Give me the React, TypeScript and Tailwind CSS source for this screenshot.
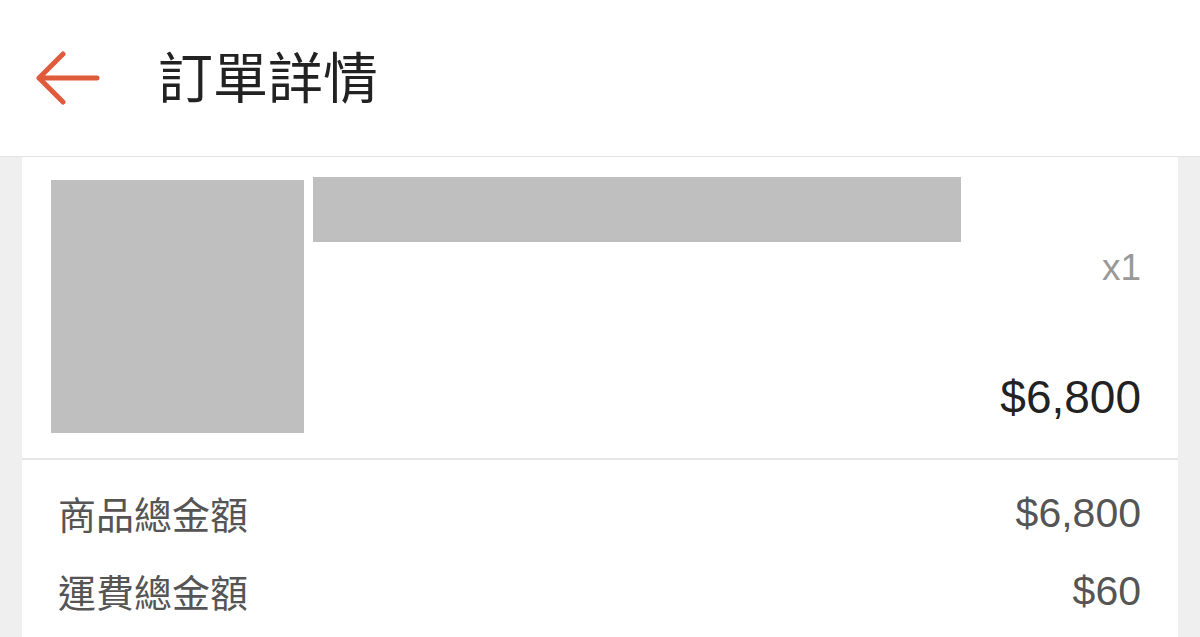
import React from 'react';

const cjk = { fontFamily: '"Noto Sans CJK TC", "Noto Sans", sans-serif' };
const latin = { fontFamily: '"Liberation Sans", Arial, sans-serif' };

const BackArrow: React.FC = () => (
  <svg width="66" height="56" viewBox="0 0 66 56" fill="none">
    <path
      d="M3 28 H61 M27 4 L3 28 L27 52"
      stroke="#e05a3c"
      strokeWidth="5"
      strokeLinecap="round"
      strokeLinejoin="round"
    />
  </svg>
);

const SummaryRow: React.FC<{ label: string; amount: string }> = ({ label, amount }) => (
  <div className="h-[78px] flex items-center justify-between">
    <span className="text-[38px] leading-none text-[#555]" style={cjk}>
      {label}
    </span>
    <span className="text-[41px] leading-none text-[#555]" style={latin}>
      {amount}
    </span>
  </div>
);

export default function App() {
  return (
    <div className="w-full h-[637px] bg-[#efefef] overflow-hidden flex flex-col">
      <header className="h-[157px] shrink-0 bg-white border-b border-[#e3e3e3] flex items-center pl-[36px]">
        <BackArrow />
        <h1 className="ml-[56px] mb-[8px] text-[55px] leading-none text-[#222] font-normal" style={cjk}>
          訂單詳情
        </h1>
      </header>

      <div className="flex-1 mx-[22px] bg-white">
        <div className="flex items-stretch pt-[20px] pb-[25px] pl-[29px] pr-[37px]">
          <div className="w-[253px] h-[253px] mt-[3px] bg-[#bfbfbf] shrink-0" />
          <div className="flex-1 ml-[9px] flex flex-col">
            <div className="w-[648px] h-[65px] bg-[#bfbfbf]" />
            <div className="mt-[6px] self-end text-[37px] leading-[40px] text-[#999]" style={latin}>
              x1
            </div>
            <div className="flex-1" />
            <div className="mb-[13px] self-end text-[46px] leading-[46px] text-[#222]" style={latin}>
              $6,800
            </div>
          </div>
        </div>

        <div className="border-t-2 border-[#e6e6e6] pt-[14px] pl-[36px] pr-[37px]">
          <SummaryRow label="商品總金額" amount="$6,800" />
          <SummaryRow label="運費總金額" amount="$60" />
        </div>
      </div>
    </div>
  );
}
